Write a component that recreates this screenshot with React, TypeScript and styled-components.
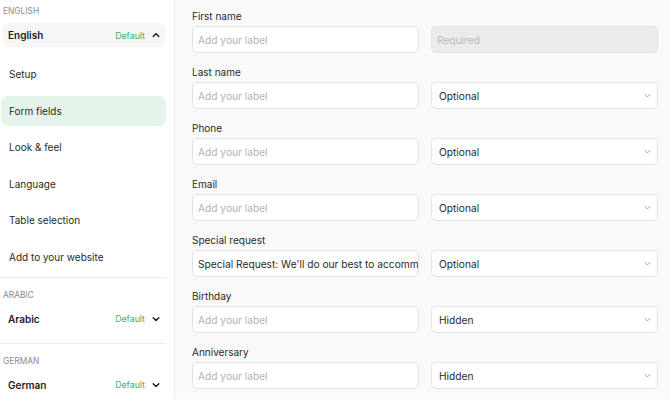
import React from 'react';
import styled, { createGlobalStyle } from 'styled-components';

const GlobalStyle = createGlobalStyle`
  html, body {
    margin: 0;
    padding: 0;
    background: #f9f9f9;
    font-family: Inter, "Noto Sans", sans-serif;
    color: #1f1f1f;
  }
  * { box-sizing: border-box; }
`;

const Page = styled.div`
  display: flex;
  width: 670px;
  height: 399px;
  overflow: hidden;
`;

const Sidebar = styled.aside`
  width: 175px;
  flex-shrink: 0;
  background: #ffffff;
  border-right: 1px solid #ececec;
  padding: 0 8px 0 1px;
`;

const Section = styled.div<{ first?: boolean }>`
  padding-top: ${({ first }) => (first ? '5px' : '11px')};
  padding-bottom: 12px;
  border-bottom: 1px solid #ececec;
  &:last-child { border-bottom: none; }
`;

const SectionLabel = styled.div`
  font-size: 8.4px;
  line-height: 12px;
  color: #8a8a8a;
  text-transform: uppercase;
  padding-left: 2px;
  margin-bottom: 6px;
`;

const LangRow = styled.div<{ open?: boolean }>`
  display: flex;
  align-items: center;
  height: 24px;
  padding: 0 6px;
  margin-left: 1px;
  border-radius: 8px;
  background: ${({ open }) => (open ? '#f6f6f6' : 'transparent')};
`;

const LangName = styled.div`
  flex: 1;
  font-size: 10px;
  font-weight: 600;
  color: #1c1c1c;
`;

const DefaultTag = styled.span`
  font-size: 8.8px;
  color: #3db36b;
  margin-right: 7px;
`;

const NavList = styled.div`
  display: flex;
  flex-direction: column;
  gap: 6.6px;
  margin-top: 12px;
  margin-bottom: -7px;
`;

const NavItem = styled.div<{ active?: boolean }>`
  height: 30px;
  display: flex;
  align-items: center;
  padding-left: 8px;
  border-radius: 7px;
  font-size: 10px;
  color: #2a2a2a;
  background: ${({ active }) => (active ? '#e4f4ea' : 'transparent')};
`;

const Main = styled.main`
  flex: 1;
  padding: 9px 12px 0 17px;
  display: grid;
  grid-template-columns: 227px 227px;
  column-gap: 12px;
  row-gap: 12px;
  align-content: start;
`;

const Field = styled.div`
  display: flex;
  flex-direction: column;
`;

const FieldLabel = styled.div`
  height: 14px;
  line-height: 14px;
  font-size: 10px;
  color: #2a2a2a;
  margin-bottom: 3px;
`;

const Box = styled.div<{ disabled?: boolean; filled?: boolean }>`
  height: 27px;
  display: flex;
  align-items: center;
  border: 1px solid ${({ disabled }) => (disabled ? '#e2e2e2' : '#e3e3e3')};
  border-radius: 5px;
  background: ${({ disabled }) => (disabled ? '#ebebeb' : '#ffffff')};
  padding: 0 0 0 5px;
  font-size: 10.2px;
  white-space: nowrap;
  overflow: hidden;
  text-overflow: clip;
  color: ${({ disabled, filled }) => (disabled ? '#b9b9b9' : filled ? '#2a2a2a' : '#b3b3b3')};
`;

const SelectBox = styled(Box)`
  padding: 0 6px 0 7px;
  color: #2a2a2a;
  justify-content: space-between;
`;

const Chevron = ({ up, size = 8, color = '#1c1c1c', width = 1.8 }: { up?: boolean; size?: number; color?: string; width?: number }) => (
  <svg width={size} height={size} viewBox="0 0 10 10" fill="none">
    <path
      d={up ? 'M1.5 7 L5 3.5 L8.5 7' : 'M1.5 3.5 L5 7 L8.5 3.5'}
      stroke={color}
      strokeWidth={width}
      strokeLinecap="round"
      strokeLinejoin="round"
    />
  </svg>
);

const nav = ['Setup', 'Form fields', 'Look & feel', 'Language', 'Table selection', 'Add to your website'];

const fields: { label: string; value?: string; status: string }[] = [
  { label: 'First name', status: 'Required' },
  { label: 'Last name', status: 'Optional' },
  { label: 'Phone', status: 'Optional' },
  { label: 'Email', status: 'Optional' },
  { label: 'Special request', value: "Special Request: We'll do our best to accommodate", status: 'Optional' },
  { label: 'Birthday', status: 'Hidden' },
  { label: 'Anniversary', status: 'Hidden' },
];

export default function App() {
  return (
    <>
      <GlobalStyle />
      <Page>
        <Sidebar>
          <Section first>
            <SectionLabel>English</SectionLabel>
            <LangRow open>
              <LangName>English</LangName>
              <DefaultTag>Default</DefaultTag>
              <Chevron up />
            </LangRow>
            <NavList>
              {nav.map((n) => (
                <NavItem key={n} active={n === 'Form fields'}>{n}</NavItem>
              ))}
            </NavList>
          </Section>
          <Section>
            <SectionLabel>Arabic</SectionLabel>
            <LangRow>
              <LangName>Arabic</LangName>
              <DefaultTag>Default</DefaultTag>
              <Chevron />
            </LangRow>
          </Section>
          <Section>
            <SectionLabel>German</SectionLabel>
            <LangRow>
              <LangName>German</LangName>
              <DefaultTag>Default</DefaultTag>
              <Chevron />
            </LangRow>
          </Section>
        </Sidebar>
        <Main>
          {fields.map((f) => (
            <React.Fragment key={f.label}>
              <Field>
                <FieldLabel>{f.label}</FieldLabel>
                <Box filled={!!f.value}>{f.value ?? 'Add your label'}</Box>
              </Field>
              <Field>
                <FieldLabel />
                {f.status === 'Required' ? (
                  <Box disabled>Required</Box>
                ) : (
                  <SelectBox>
                    <span>{f.status}</span>
                    <Chevron size={7} color="#8a8a8a" width={1.2} />
                  </SelectBox>
                )}
              </Field>
            </React.Fragment>
          ))}
        </Main>
      </Page>
    </>
  );
}
